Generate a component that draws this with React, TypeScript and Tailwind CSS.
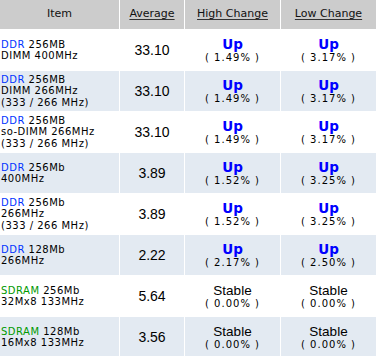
const rows = [
  { kind: 'DDR', size: '256MB', lines: ['DIMM 400MHz'], avg: '33.10', hi: ['Up', '1.49%'], lo: ['Up', '3.17%'] },
  { kind: 'DDR', size: '256MB', lines: ['DIMM 266MHz', '(333 / 266 MHz)'], avg: '33.10', hi: ['Up', '1.49%'], lo: ['Up', '3.17%'] },
  { kind: 'DDR', size: '256MB', lines: ['so-DIMM 266MHz', '(333 / 266 MHz)'], avg: '33.10', hi: ['Up', '1.49%'], lo: ['Up', '3.17%'] },
  { kind: 'DDR', size: '256Mb', lines: ['400MHz'], avg: '3.89', hi: ['Up', '1.52%'], lo: ['Up', '3.25%'] },
  { kind: 'DDR', size: '256Mb', lines: ['266MHz', '(333 / 266 MHz)'], avg: '3.89', hi: ['Up', '1.52%'], lo: ['Up', '3.25%'] },
  { kind: 'DDR', size: '128Mb', lines: ['266MHz'], avg: '2.22', hi: ['Up', '2.17%'], lo: ['Up', '2.50%'] },
  { kind: 'SDRAM', size: '256Mb', lines: ['32Mx8 133MHz'], avg: '5.64', hi: ['Stable', '0.00%'], lo: ['Stable', '0.00%'] },
  { kind: 'SDRAM', size: '128Mb', lines: ['16Mx8 133MHz'], avg: '3.56', hi: ['Stable', '0.00%'], lo: ['Stable', '0.00%'] },
]

const verdana = "font-['DejaVu_Sans',Verdana,sans-serif]"
const arial = "font-['Liberation_Sans',Arial,sans-serif]"

function Change({ value }: { value: string[] }) {
  const [label, pct] = value
  return (
    <div className="flex flex-col items-center">
      {label === 'Up' ? (
        <span className={`${verdana} text-[13.5px] font-bold leading-[15px] text-[#0000ff]`}>Up</span>
      ) : (
        <span className={`${arial} text-[13.5px] leading-[15px] text-black`}>{label}</span>
      )}
      <span className={`${verdana} text-[10px] leading-[12px] tracking-[1px] text-black whitespace-pre`}>( {pct} )</span>
    </div>
  )
}

export default function App() {
  return (
    <div className="w-[376px] h-[356px] overflow-hidden bg-white">
      <div className="grid grid-cols-[119px_64px_95px_95px] gap-px bg-white">
        <div className={`h-[29px] bg-[#cccccc] flex items-center justify-center ${verdana} text-[11px] text-[#111]`}>Item</div>
        {['Average', 'High Change', 'Low Change'].map((h) => (
          <div key={h} className={`h-[29px] bg-[#cccccc] flex items-center justify-center ${verdana} text-[11px] text-[#111]`}>
            <span className="underline underline-offset-2 decoration-[#333]">{h}</span>
          </div>
        ))}

        {rows.map((r, i) => {
          const bg = i % 2 === 1 ? 'bg-[#e3eaf2]' : 'bg-white'
          return [
            <div key={`a${i}`} className={`h-[40px] ${bg} flex flex-col justify-center pl-px ${verdana} text-[10px] leading-[11.5px] tracking-[0.5px] text-black`}>
              <div>
                <span className={r.kind === 'DDR' ? 'text-[#0033ff]' : 'text-[#009900]'}>{r.kind}</span> {r.size}
              </div>
              {r.lines.map((l) => (
                <div key={l} className="whitespace-nowrap">{l}</div>
              ))}
            </div>,
            <div key={`b${i}`} className={`h-[40px] ${bg} flex items-center justify-center ${arial} text-[14px] text-black`}>
              {r.avg}
            </div>,
            <div key={`c${i}`} className={`h-[40px] ${bg} flex items-center justify-center`}>
              <Change value={r.hi} />
            </div>,
            <div key={`d${i}`} className={`h-[40px] ${bg} flex items-center justify-center`}>
              <Change value={r.lo} />
            </div>,
          ]
        })}
      </div>
    </div>
  )
}
